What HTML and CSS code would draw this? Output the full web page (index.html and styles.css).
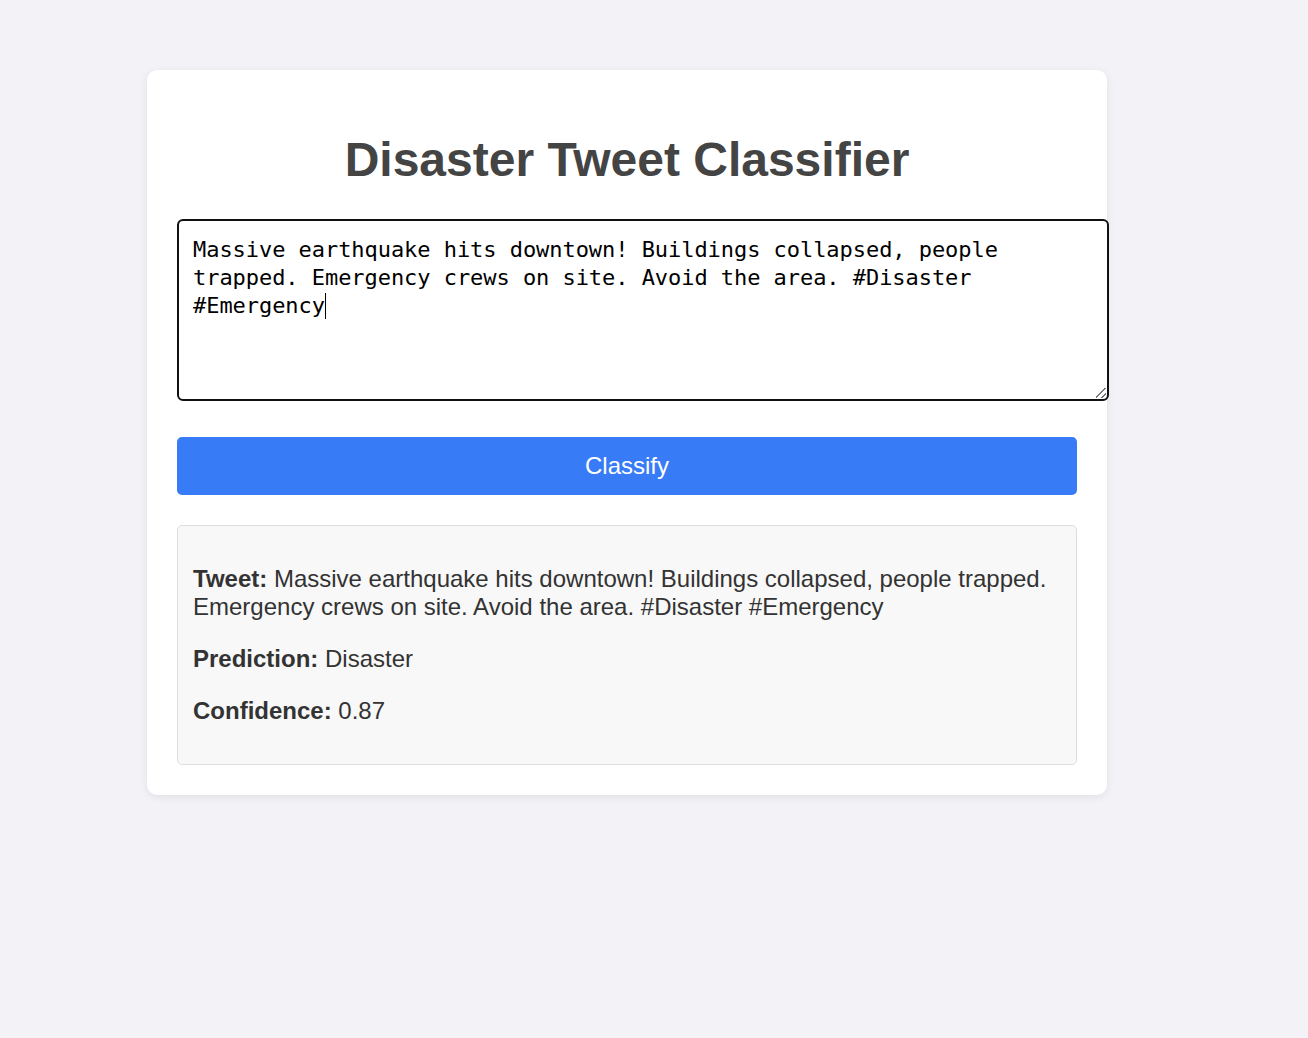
FILE: index.html
```html
<!DOCTYPE html>
<html>
<head>
<meta charset="utf-8">
<link rel="stylesheet" href="styles.css">
</head>
<body>
<div class="card">
  <h1 class="title">Disaster Tweet Classifier</h1>
  <div class="tweet-input">Massive earthquake hits downtown! Buildings collapsed, people trapped. Emergency crews on site. Avoid the area. #Disaster #Emergency<span class="caret"></span><span class="grip"></span></div>
  <button class="btn">Classify</button>
  <div class="result">
    <p><strong>Tweet:</strong> Massive earthquake hits downtown! Buildings collapsed, people trapped. Emergency crews on site. Avoid the area. #Disaster #Emergency</p>
    <p><strong>Prediction:</strong> Disaster</p>
    <p><strong>Confidence:</strong> 0.87</p>
  </div>
</div>
</body>
</html>
```

FILE: styles.css
```css
html, body {
  margin: 0;
  padding: 0;
}
body {
  background: #f2f2f7;
  font-family: "Liberation Sans", Arial, sans-serif;
  min-height: 1038px;
}
.card {
  width: 900px;
  margin: 70px 0 0 147px;
  padding: 30px;
  background: #ffffff;
  border-radius: 10px;
  box-shadow: 0 2px 8px rgba(0, 0, 0, 0.08);
  display: flex;
  flex-direction: column;
}
.title {
  font-size: 48px;
  font-weight: bold;
  color: #444444;
  text-align: center;
  margin: 32px 0 32px 0;
  line-height: 55px;
}
.tweet-input {
  position: relative;
  width: 900px;
  height: 149px;
  padding: 15px 14px 14px 14px;
  border: 2px solid #111111;
  border-radius: 6px;
  font-family: "DejaVu Sans Mono", "Liberation Mono", monospace;
  font-size: 22px;
  line-height: 28px;
  color: #000000;
  background: #ffffff;
  overflow: hidden;
  box-sizing: content-box;
  letter-spacing: -0.05px;
}
.caret {
  display: inline-block;
  width: 1px;
  height: 26px;
  background: #000;
  vertical-align: -6px;
}
.grip {
  position: absolute;
  right: 1px;
  bottom: 1px;
  width: 10px;
  height: 10px;
  background: linear-gradient(135deg, transparent 45%, #777 45%, #777 55%, transparent 55%, transparent 72%, #777 72%, #777 82%, transparent 82%);
}
.btn {
  margin-top: 36px;
  width: 900px;
  height: 58px;
  border: none;
  border-radius: 5px;
  background: #377bf6;
  color: #ffffff;
  font-family: "Liberation Sans", Arial, sans-serif;
  font-size: 24px;
  cursor: pointer;
}
.result {
  margin-top: 30px;
  padding: 15px;
  border: 1px solid #dddddd;
  border-radius: 5px;
  background: #f8f8f8;
  color: #333333;
  font-size: 24px;
  line-height: 28px;
}
.result p {
  margin: 24px 0;
}
.result strong {
  font-weight: bold;
}
```
